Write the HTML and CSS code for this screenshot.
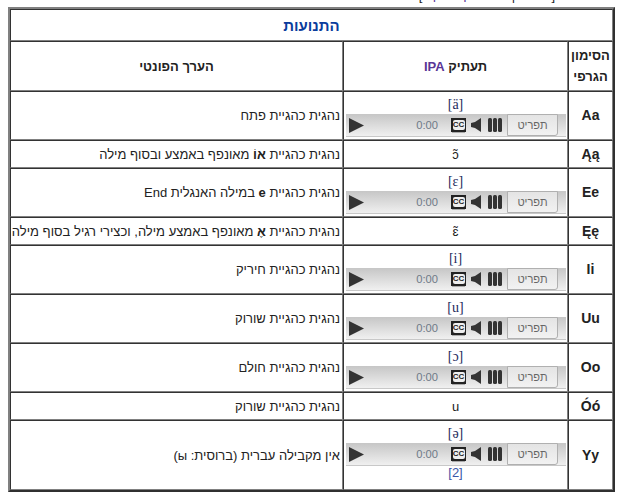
FILE: index.html
```html
<!DOCTYPE html>
<html lang="he" dir="rtl">
<head>
<meta charset="utf-8">
<title>התנועות</title>
<link rel="stylesheet" href="styles.css">
</head>
<body>
<div class="cut"><span>[<a class="link">עריכה</a> | <a class="visited">עריכת קוד מקור</a>]</span></div>
<table class="vowels">
<colgroup><col class="c1"><col class="c2"><col class="c3"></colgroup>
<tr class="r-title"><th colspan="3" class="title">התנועות</th></tr>
<tr class="r-head"><th>הסימון<br>הגרפי</th><th>תעתיק <a class="visited">IPA</a></th><th>הערך הפונטי</th></tr>
<tr class="r-audio"><th>Aa</th><td><a class="ipa">[ä]</a><div class="player"><span class="tr">תפריט</span><span class="bars"><i></i><i></i><i></i></span><svg class="vol" viewBox="0 0 10 14"><path d="M0 5l4-1 6-4v14l-6-4-4-1z"/></svg><span class="cc"><b>CC</b></span><span class="time">0:00</span><svg class="play" viewBox="0 0 15 15"><path d="M0 0l15 7.5L0 15z"/></svg></div></td><td>נהגית כהגיית פתח</td></tr>
<tr class="r-text"><th>Ąą</th><td>ɔ̃</td><td>נהגית כהגיית <b>אוֹ</b> מאונפף באמצע ובסוף מילה</td></tr>
<tr class="r-audio"><th>Ee</th><td><a class="ipa">[ɛ]</a><div class="player"><span class="tr">תפריט</span><span class="bars"><i></i><i></i><i></i></span><svg class="vol" viewBox="0 0 10 14"><path d="M0 5l4-1 6-4v14l-6-4-4-1z"/></svg><span class="cc"><b>CC</b></span><span class="time">0:00</span><svg class="play" viewBox="0 0 15 15"><path d="M0 0l15 7.5L0 15z"/></svg></div></td><td>נהגית כהגיית <b>e</b> במילה האנגלית End</td></tr>
<tr class="r-text"><th>Ęę</th><td>ɛ̃</td><td>נהגית כהגיית <b>אֶ</b> מאונפף באמצע מילה, וכצירי רגיל בסוף מילה</td></tr>
<tr class="r-audio"><th>Ii</th><td><a class="ipa">[i]</a><div class="player"><span class="tr">תפריט</span><span class="bars"><i></i><i></i><i></i></span><svg class="vol" viewBox="0 0 10 14"><path d="M0 5l4-1 6-4v14l-6-4-4-1z"/></svg><span class="cc"><b>CC</b></span><span class="time">0:00</span><svg class="play" viewBox="0 0 15 15"><path d="M0 0l15 7.5L0 15z"/></svg></div></td><td>נהגית כהגיית חיריק</td></tr>
<tr class="r-audio"><th>Uu</th><td><a class="ipa">[u]</a><div class="player"><span class="tr">תפריט</span><span class="bars"><i></i><i></i><i></i></span><svg class="vol" viewBox="0 0 10 14"><path d="M0 5l4-1 6-4v14l-6-4-4-1z"/></svg><span class="cc"><b>CC</b></span><span class="time">0:00</span><svg class="play" viewBox="0 0 15 15"><path d="M0 0l15 7.5L0 15z"/></svg></div></td><td>נהגית כהגיית שורוק</td></tr>
<tr class="r-audio"><th>Oo</th><td><a class="ipa">[ɔ]</a><div class="player"><span class="tr">תפריט</span><span class="bars"><i></i><i></i><i></i></span><svg class="vol" viewBox="0 0 10 14"><path d="M0 5l4-1 6-4v14l-6-4-4-1z"/></svg><span class="cc"><b>CC</b></span><span class="time">0:00</span><svg class="play" viewBox="0 0 15 15"><path d="M0 0l15 7.5L0 15z"/></svg></div></td><td>נהגית כהגיית חולם</td></tr>
<tr class="r-text"><th>Óó</th><td>u</td><td>נהגית כהגיית שורוק</td></tr>
<tr class="r-last"><th>Yy</th><td><a class="ipa">[ə]</a><div class="player"><span class="tr">תפריט</span><span class="bars"><i></i><i></i><i></i></span><svg class="vol" viewBox="0 0 10 14"><path d="M0 5l4-1 6-4v14l-6-4-4-1z"/></svg><span class="cc"><b>CC</b></span><span class="time">0:00</span><svg class="play" viewBox="0 0 15 15"><path d="M0 0l15 7.5L0 15z"/></svg></div><a class="ref">[2]</a></td><td>אין מקבילה עברית (ברוסית: ы)</td></tr>
</table>
</body>
</html>
```
FILE: styles.css
```css
html, body { margin: 0; padding: 0; background: #fff; }
body { font-family: "Liberation Sans", Arial, sans-serif; font-size: 13px; color: #222; height: 498px; overflow: hidden; }
.cut { height: 7px; overflow: hidden; display: flex; justify-content: flex-start; padding-right: 65px; }
.cut span { margin-top: -12px; font-size: 13px; line-height: 15px; height: 15px; }
.link { color: #0645ad; }
.visited { color: #5a3696; }
.vowels { border-collapse: separate; border-spacing: 0; table-layout: fixed; width: 607px; margin: 0 5px 0 8px; border-style: solid; border-width: 2px; border-color: #808080 #303030 #303030 #808080; }
.c1 { width: 45px; } .c2 { width: 225px; } .c3 { width: 333px; }
.vowels th, .vowels td { border-style: solid; border-width: 1px; border-color: #333 #808080 #808080 #333; padding: 0 1px; text-align: center; vertical-align: middle; line-height: 21px; }
.vowels td:last-child { text-align: right; padding: 0 2px; white-space: nowrap; }
.vowels th:last-child { text-align: center; }
.vowels th { font-weight: bold; color: #222; }
.r-title > * { height: 30px; box-sizing: border-box; }
.r-title { height: 32px; }
.r-head { height: 50px; }
.r-audio { height: 49px; }
.r-text { height: 28px; }
.r-last { height: 70px; }
.vowels .r-audio > td:nth-child(2), .vowels .r-last > td:nth-child(2) { vertical-align: top; padding-top: 1px; }
.vowels tr > th:first-child { font-size: 14px; }
.vowels .r-head > th:first-child { font-size: 13px; }
.vowels .r-title > th.title { color: #0a3c9c; font-size: 15px; text-align: center; }
.ipa, .ref { display: block; font-family: "Liberation Serif", serif; font-size: 14px; line-height: 18px; padding-top: 3px; color: #1c2a5c; }
.ref { font-family: "Liberation Sans", sans-serif; font-size: 13px; color: #3a55a8; padding-top: 0; line-height: 13px; }
.player { direction: ltr; display: flex; flex-direction: row-reverse; align-items: center; height: 23px; box-sizing: border-box; margin: 0 0 0 1px; background: linear-gradient(#c6c6c6, #f0f0f0); border-bottom: 1px solid #c8c8c8; color: #777; }
.tr { width: 51px; height: 22px; box-sizing: border-box; line-height: 20px; border: 1px solid #b0b0b0; border-radius: 0 0 3px 0; margin-right: 8px; background: linear-gradient(#e4e4e4, #f2f2f2); direction: rtl; font-size: 11px; color: #666; text-align: center; flex: none; }
.bars { display: flex; gap: 1px; margin-right: 5px; }
.bars i { width: 4px; height: 14px; background: #333; border-radius: 1.5px; }
.vol { width: 10px; height: 14px; fill: #333; margin-right: 7px; }
.cc { width: 15px; height: 14px; background: #222; box-sizing: border-box; margin-right: 5px; display: flex; align-items: center; justify-content: center; box-shadow: 0 2px 0 -1px #aaa; }
.cc b { background: #eee; color: #222; font-size: 8px; line-height: 10px; width: 12px; text-align: center; border-radius: 2px; font-weight: bold; }
.time { margin-right: 13px; line-height: 22px; color: #6f7a88; font-size: 11.2px; }
.play { width: 15px; height: 15px; fill: #333; margin-right: auto; margin-left: 3px; }
```
